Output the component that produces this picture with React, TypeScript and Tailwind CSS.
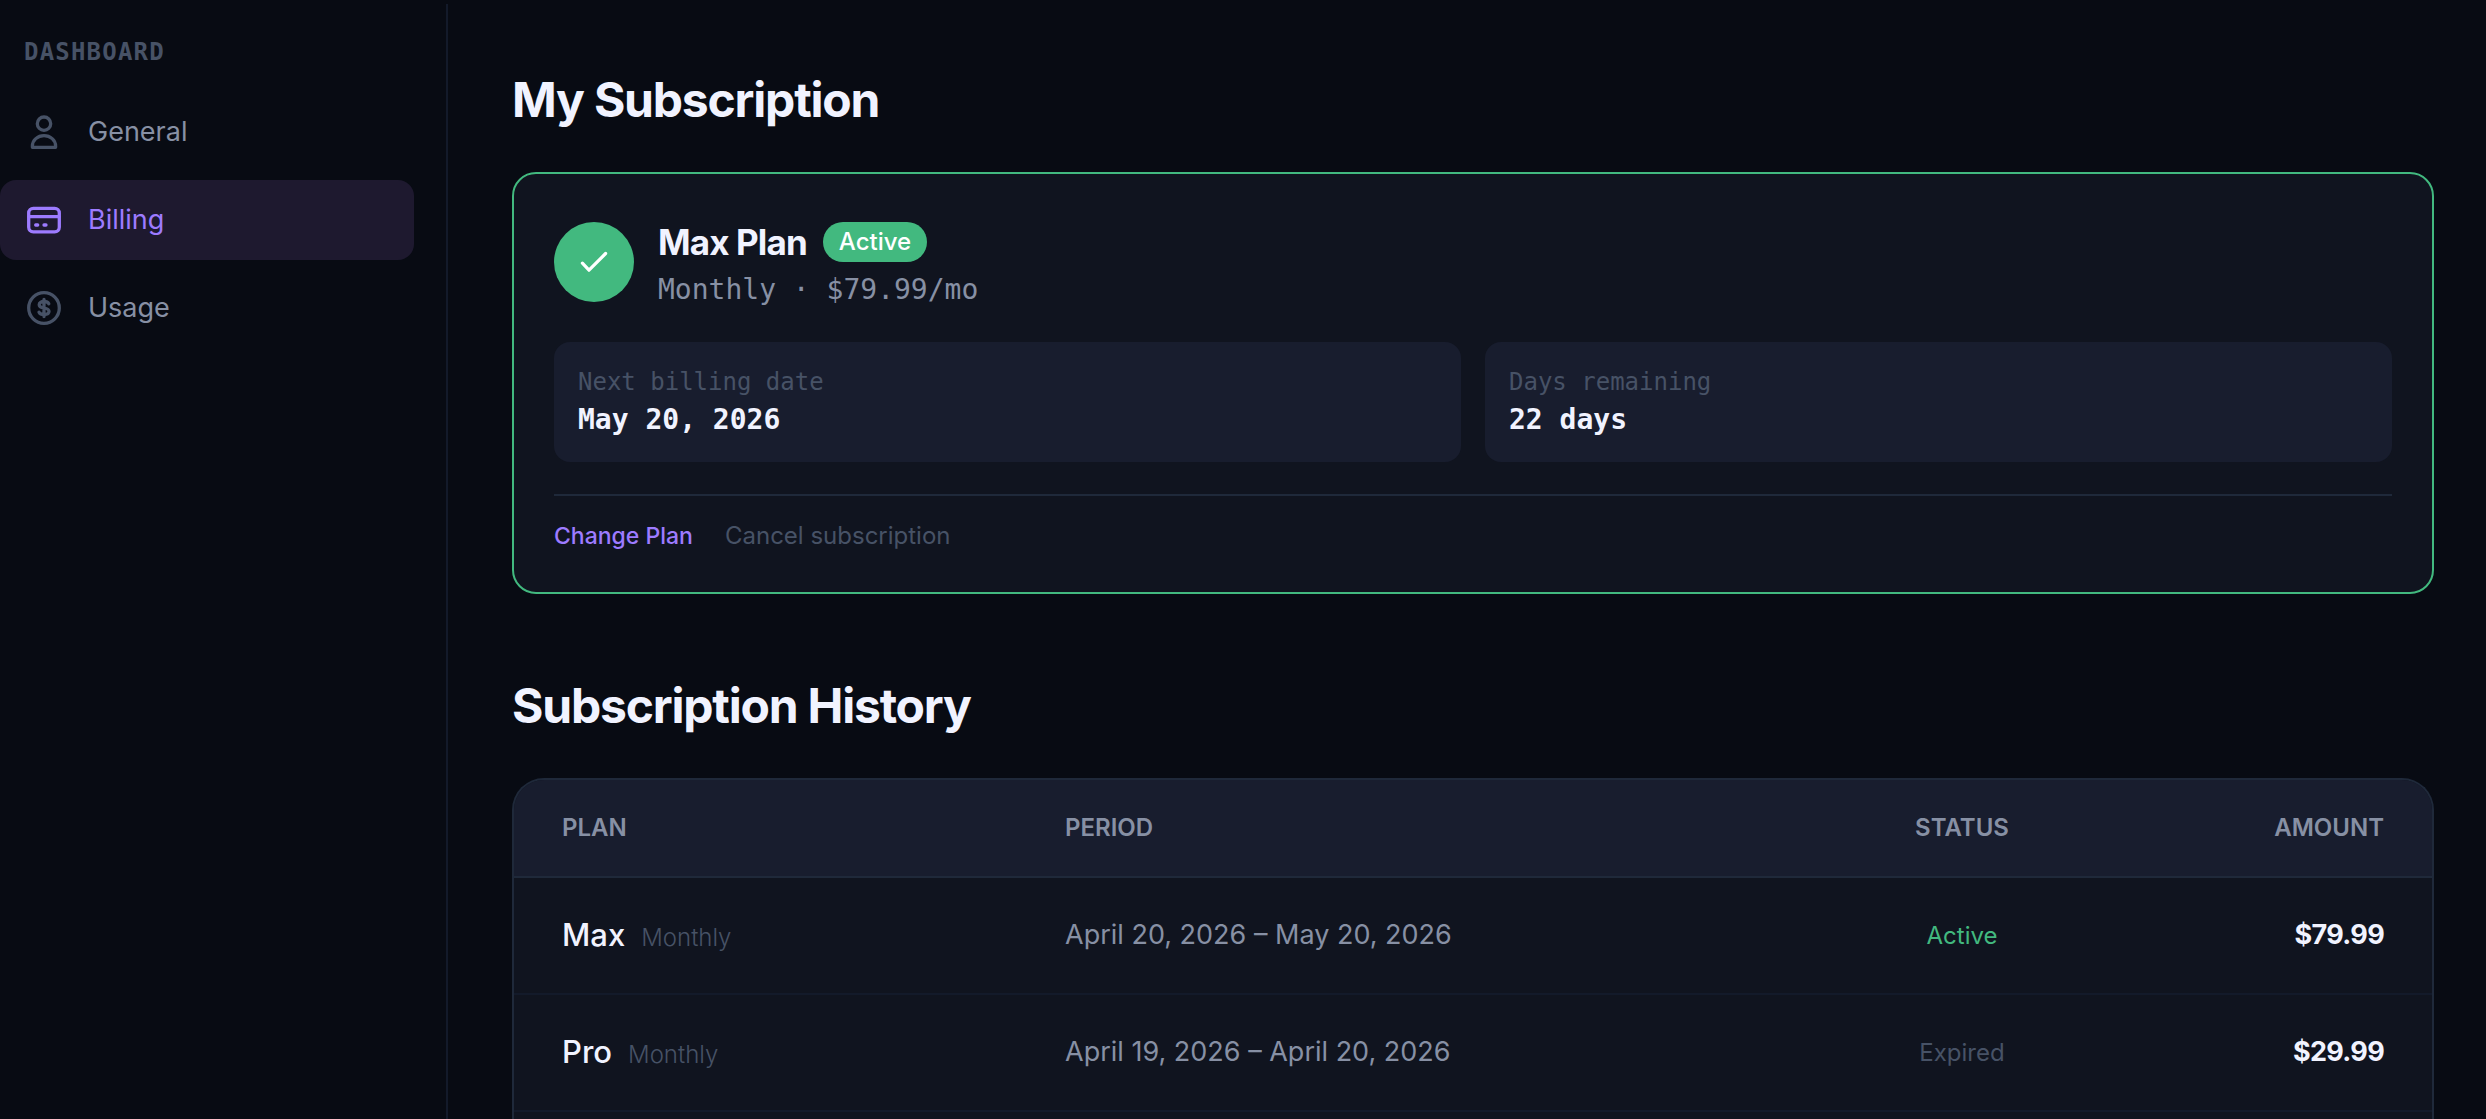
import type { ReactNode } from "react";

const navItems: { label: string; icon: ReactNode; active?: boolean }[] = [
  { label: "General", icon: <UserIcon /> },
  { label: "Billing", icon: <CardIcon />, active: true },
  { label: "Usage", icon: <DollarIcon /> },
];

const history = [
  { plan: "Max", cycle: "Monthly", period: "April 20, 2026 – May 20, 2026", status: "Active", amount: "$79.99" },
  { plan: "Pro", cycle: "Monthly", period: "April 19, 2026 – April 20, 2026", status: "Expired", amount: "$29.99" },
];

export default function App() {
  return (
    <div className="flex h-screen overflow-hidden bg-[#080b13] font-['Inter',sans-serif] text-[#f1f3ff]">
      <aside className="mt-1 flex w-[448px] shrink-0 flex-col border-r-2 border-[#131a2a] pr-8">
        <h2 className="pt-7 pb-5 pl-6 font-['DejaVu_Sans_Mono',monospace] text-[24px] leading-10 font-bold tracking-wider text-[#475266]">
          DASHBOARD
        </h2>
        <nav className="flex flex-col gap-2">
          {navItems.map((item) => (
            <a
              key={item.label}
              href="#"
              className={
                item.active
                  ? "flex h-20 items-center gap-6 rounded-2xl bg-[#1e192f] px-6 text-[27px] text-[#9d7bff]"
                  : "flex h-20 items-center gap-6 rounded-2xl px-6 text-[27px] text-[#8790a4]"
              }
            >
              <span className={item.active ? "text-[#9d7bff]" : "text-[#475266]"}>{item.icon}</span>
              {item.label}
            </a>
          ))}
        </nav>
      </aside>

      <main className="flex min-w-0 flex-1 flex-col pt-[68px] pr-[52px] pl-16">
        <h1 className="text-[48px] leading-[64px] font-bold tracking-tight">My Subscription</h1>

        {/* Current plan */}
        <section className="mt-10 rounded-3xl border-2 border-[#42b97f] bg-[#10141f] px-10 pt-12 pb-10">
          <div className="flex items-start gap-6">
            <div className="flex size-20 items-center justify-center rounded-full bg-[#42b97f] text-white">
              <CheckIcon />
            </div>
            <div>
              <div className="flex h-10 items-center gap-4">
                <h2 className="text-[35px] font-bold tracking-tight">Max Plan</h2>
                <span className="flex h-10 items-center rounded-full bg-[#42b97f] px-4 text-[24px] font-medium text-white">
                  Active
                </span>
              </div>
              <p className="mt-2 font-['DejaVu_Sans_Mono',monospace] text-[28px] leading-10 text-[#8790a4]">
                Monthly · $79.99/mo
              </p>
            </div>
          </div>

          <div className="mt-8 grid grid-cols-2 gap-6">
            <InfoBox label="Next billing date" value="May 20, 2026" />
            <InfoBox label="Days remaining" value="22 days" />
          </div>

          <div className="mt-8 flex gap-8 border-t-2 border-[#1f293a] pt-6 leading-8">
            <button className="text-[23px] font-medium text-[#9d7bff]">Change Plan</button>
            <button className="text-[24px] text-[#475266]">Cancel subscription</button>
          </div>
        </section>

        <h1 className="mt-20 text-[48px] leading-[64px] font-bold tracking-tight">Subscription History</h1>

        <section className="mt-10 flex-1 overflow-hidden rounded-t-[32px] border-2 border-b-0 border-[#1f293a] bg-[#10141f]">
          <table className="w-full table-fixed">
            <thead>
              <tr className="h-[97px] border-b-2 border-[#1f293a] bg-[#181d2e] text-[24px] text-[#8790a4]">
                <th className="w-[503px] px-12 text-left font-semibold">PLAN</th>
                <th className="px-12 text-left font-semibold">PERIOD</th>
                <th className="w-[276px] px-12 text-center font-semibold">STATUS</th>
                <th className="w-[332px] px-12 text-right font-semibold">AMOUNT</th>
              </tr>
            </thead>
            <tbody>
              {history.map((row) => (
                <tr key={row.period} className="h-[117px] border-b-2 border-[#131a2a]">
                  <td className="px-12 text-[31px] font-medium">
                    {row.plan}
                    <span className="ml-4 text-[24px] font-light text-[#475266]">{row.cycle}</span>
                  </td>
                  <td className="px-12 text-[27px] text-[#8790a4]">{row.period}</td>
                  <td
                    className={
                      row.status === "Active"
                        ? "px-12 text-center text-[24px] text-[#42b97f]"
                        : "px-12 text-center text-[24px] text-[#475266]"
                    }
                  >
                    {row.status}
                  </td>
                  <td className="px-12 text-right text-[27px] font-bold tracking-tight">{row.amount}</td>
                </tr>
              ))}
            </tbody>
          </table>
        </section>
      </main>
    </div>
  );
}

function InfoBox({ label, value }: { label: string; value: string }) {
  return (
    <div className="h-[120px] rounded-2xl bg-[#181d2e] px-6 pt-5 font-['DejaVu_Sans_Mono',monospace]">
      <p className="text-[24px] leading-10 text-[#475266]">{label}</p>
      <p className="text-[28px] leading-9 font-bold">{value}</p>
    </div>
  );
}

function UserIcon() {
  return (
    <svg className="size-10" viewBox="0 0 40 40" fill="none" stroke="currentColor" strokeWidth="3.3" strokeLinejoin="round">
      <circle cx="20" cy="11.7" r="6.7" />
      <path d="M8.4 35.3V34a11.6 10.4 0 0 1 23.2 0v1.3z" />
    </svg>
  );
}

function CardIcon() {
  return (
    <svg className="size-10" viewBox="0 0 40 40" fill="none" stroke="currentColor" strokeWidth="3.3" strokeLinecap="round">
      <rect x="4.7" y="8.3" width="30.6" height="23.6" rx="4.6" />
      <path d="M5 16.7h30M11.7 25h2M20 25h2" />
    </svg>
  );
}

function DollarIcon() {
  return (
    <svg className="size-10" viewBox="0 0 40 40" fill="none" stroke="currentColor" strokeWidth="3.3" strokeLinecap="round">
      <circle cx="20" cy="20" r="15.3" />
      <path d="M20 11.5v17M24.8 15.8c-.8-1.6-2.6-2.3-4.8-2.3-2.8 0-4.8 1.2-4.8 3.2 0 2.1 2 2.8 4.8 3.3s5 1.2 5 3.3-2.2 3.2-5 3.2c-2.4 0-4.2-.8-5-2.3" />
    </svg>
  );
}

function CheckIcon() {
  return (
    <svg className="size-10" viewBox="0 0 40 40" fill="none" stroke="currentColor" strokeWidth="3.2" strokeLinecap="round" strokeLinejoin="round">
      <path d="m8.4 21.2 6.6 7 16.6-16.7" />
    </svg>
  );
}
